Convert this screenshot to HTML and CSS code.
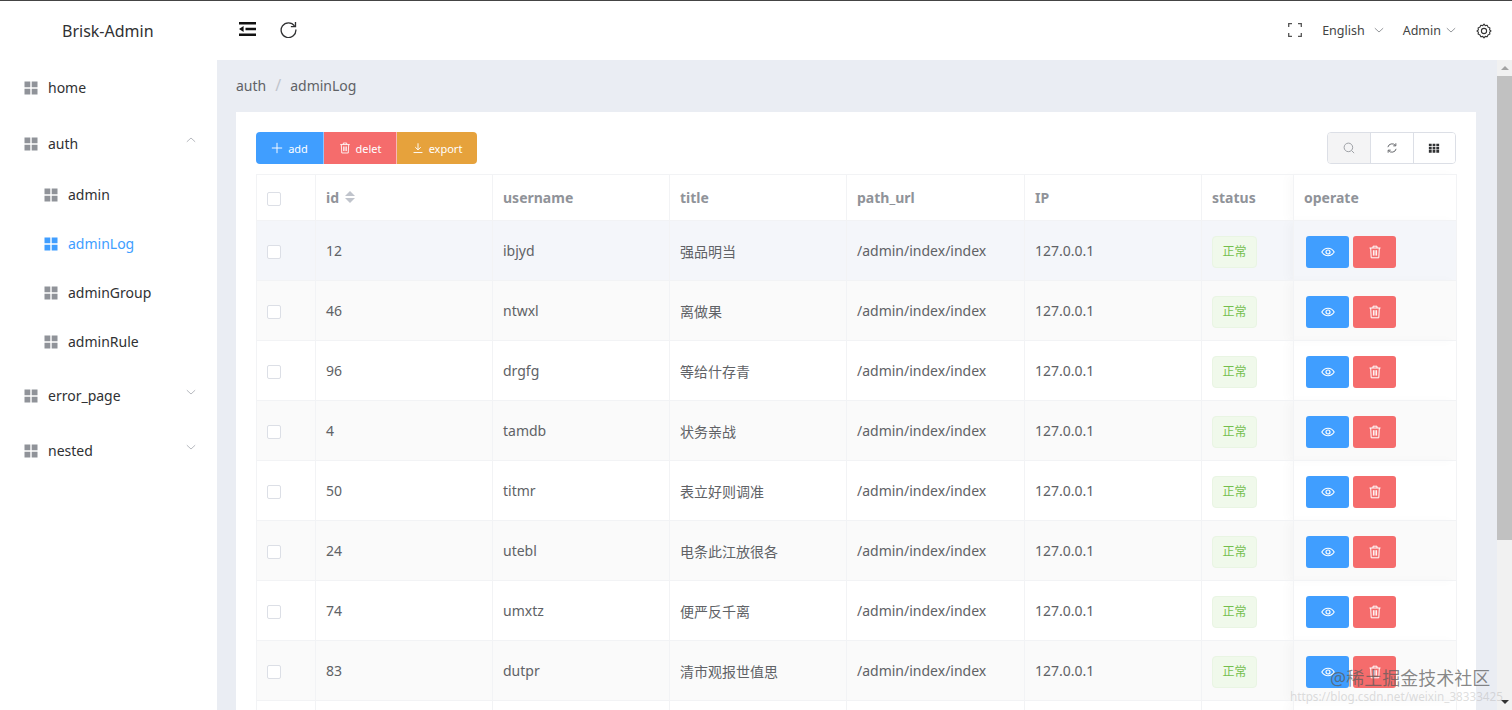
FILE: index.html
```html
<!DOCTYPE html>
<html lang="en">
<head>
<meta charset="UTF-8">
<meta name="viewport" content="width=device-width, initial-scale=1.0">
<title>Brisk-Admin</title>
<link rel="stylesheet" href="styles.css">
</head>
<body>

<svg class="defs" width="0" height="0">
  <symbol id="i-grid" viewBox="0 0 14 14"><path d="M.5 .5h5.800v5.800H.5zM7.700 .5h5.800v5.800H7.700zM.5 7.700h5.800v5.800H.5zM7.700 7.700h5.800v5.800H7.700z"/></symbol>
  <symbol id="i-trash" viewBox="0 0 14 14"><path d="M1.500 3h11M5 3V1.200h4V3M2.700 3l.5 9.800h7.600l.5-9.800M5.400 5.200v5.400M7 5.200v5.400M8.600 5.200v5.400" fill="none" stroke="currentColor" stroke-width="1"/></symbol>
  <symbol id="i-eye" viewBox="0 0 14 14"><path d="M.8 7C2.300 4.600 4.400 3.300 7 3.300s4.700 1.300 6.200 3.700c-1.500 2.400-3.600 3.700-6.200 3.700S2.300 9.400.8 7z" fill="none" stroke="currentColor" stroke-width="1.100"/><circle cx="7" cy="7" r="2" fill="none" stroke="currentColor" stroke-width="1.200"/></symbol>
  <symbol id="i-down" viewBox="0 0 12 12"><path d="M1 3.800l5 4.600 5-4.600" fill="none" stroke="currentColor" stroke-width="1"/></symbol>
</svg>

<div class="topline"></div>
<div class="layout">
  <aside class="sidebar">
    <div class="logo">Brisk-Admin</div>
    <nav class="menu">
      <a class="menu-item item-home"><svg class="grid"><use href="#i-grid"/></svg>home</a>
      <a class="menu-item item-auth"><svg class="grid"><use href="#i-grid"/></svg>auth<svg class="arrow up"><use href="#i-down"/></svg></a>
      <a class="sub-item"><svg class="grid"><use href="#i-grid"/></svg>admin</a>
      <a class="sub-item active"><svg class="grid"><use href="#i-grid"/></svg>adminLog</a>
      <a class="sub-item"><svg class="grid"><use href="#i-grid"/></svg>adminGroup</a>
      <a class="sub-item"><svg class="grid"><use href="#i-grid"/></svg>adminRule</a>
      <a class="menu-item item-error"><svg class="grid"><use href="#i-grid"/></svg>error_page<svg class="arrow"><use href="#i-down"/></svg></a>
      <a class="menu-item item-nested"><svg class="grid"><use href="#i-grid"/></svg>nested<svg class="arrow"><use href="#i-down"/></svg></a>
    </nav>
  </aside>

  <div class="right">
    <header class="navbar">
      <div class="nav-left">
        <svg class="fold" viewBox="0 0 17 14"><path d="M0 0h17v2.400H0zM6.500 5.800H17v2.400H6.500zM0 11.600h17V14H0zM0 7l4.600-2.900v5.800z"/></svg>
        <svg class="refresh" viewBox="0 0 18 18"><path d="M15.400 5.200A7.800 7.800 0 1 0 16.800 9" fill="none" stroke="currentColor" stroke-width="1.400"/><path d="M16.400 1v4.900h-4.900" fill="none" stroke="currentColor" stroke-width="1.400"/></svg>
      </div>
      <div class="nav-right">
        <svg class="full" viewBox="0 0 14 14"><path d="M.7 4V.7H4M10 .7h3.300V4M13.300 10v3.300H10M4 13.300H.7V10" fill="none" stroke="currentColor" stroke-width="1.300"/></svg>
        <span class="nav-drop lang">English<svg class="arrow"><use href="#i-down"/></svg></span>
        <span class="nav-drop user">Admin<svg class="arrow"><use href="#i-down"/></svg></span>
        <svg class="gear" viewBox="0 0 16 16"><path d="M8 1l1.200 1.600 2-.3.8 1.800 1.900.8-.3 2L15 8l-1.400 1.100.3 2-1.900.8-.8 1.800-2-.3L8 15l-1.200-1.600-2 .3-.8-1.800-1.900-.8.3-2L1 8l1.400-1.100-.3-2 1.900-.8.8-1.800 2 .3z" fill="none" stroke="currentColor" stroke-width="1.100" stroke-linejoin="round"/><circle cx="8" cy="8" r="2.600" fill="none" stroke="currentColor" stroke-width="1.100"/></svg>
      </div>
    </header>

    <div class="body-wrap">
      <main class="main">
        <div class="crumb"><span>auth</span><i>/</i><span>adminLog</span></div>
        <section class="card">
          <div class="toolbar">
            <div class="btn-group">
              <button class="btn blue"><svg viewBox="0 0 14 14"><path d="M7 1v12M1 7h12" fill="none" stroke="currentColor" stroke-width="1.100"/></svg>add</button>
              <button class="btn red"><svg><use href="#i-trash"/></svg>delet</button>
              <button class="btn orange"><svg viewBox="0 0 14 14"><path d="M7 1.500v7.500M3.800 6l3.200 3.200L10.200 6M1.800 12.300h10.400" fill="none" stroke="currentColor" stroke-width="1.100"/></svg>export</button>
            </div>
            <div class="tool-group">
              <button class="tool on"><svg viewBox="0 0 14 14"><circle cx="6.300" cy="6.300" r="5" fill="none" stroke="currentColor"/><path d="M10 10l3 3" stroke="currentColor"/></svg></button>
              <button class="tool"><svg viewBox="0 0 14 14"><path d="M2.200 6A5 5 0 0 1 11 4M11.800 8A5 5 0 0 1 3 10" fill="none" stroke="currentColor" stroke-width="1.100"/><path d="M11.500 1.500V4.500H8.500M2.500 12.500V9.500H5.500" fill="none" stroke="currentColor" stroke-width="1.100"/></svg></button>
              <button class="tool dark"><svg viewBox="0 0 14 14"><path d="M1 2h3.300v3H1zM5.400 2h3.200v3H5.400zM9.700 2H13v3H9.700zM1 5.700h3.300v3H1zM5.400 5.700h3.200v3H5.400zM9.700 5.700H13v3H9.700zM1 9.400h3.300v3H1zM5.400 9.400h3.200v3H5.400zM9.700 9.400H13v3H9.700z"/></svg></button>
            </div>
          </div>

          <table class="grid-table">
            <colgroup>
              <col class="c-check"><col class="c-wide"><col class="c-wide"><col class="c-wide"><col class="c-path"><col class="c-wide"><col class="c-status"><col class="c-op">
            </colgroup>
            <thead>
              <tr>
                <th><span class="check"></span></th>
                <th>id <span class="sort"><b class="sort-up"></b><b class="sort-down"></b></span></th>
                <th>username</th>
                <th>title</th>
                <th>path_url</th>
                <th>IP</th>
                <th>status</th>
                <th class="fixed">operate</th>
              </tr>
            </thead>
            <tbody>
              <tr class="hover">
                <td><span class="check"></span></td><td>12</td><td>ibjyd</td><td>强品明当</td><td>/admin/index/index</td><td>127.0.0.1</td>
                <td class="status"><span class="tag">正常</span></td>
                <td class="fixed"><button class="mini blue"><svg><use href="#i-eye"/></svg></button><button class="mini red"><svg><use href="#i-trash"/></svg></button></td>
              </tr>
              <tr class="stripe">
                <td><span class="check"></span></td><td>46</td><td>ntwxl</td><td>离做果</td><td>/admin/index/index</td><td>127.0.0.1</td>
                <td class="status"><span class="tag">正常</span></td>
                <td class="fixed"><button class="mini blue"><svg><use href="#i-eye"/></svg></button><button class="mini red"><svg><use href="#i-trash"/></svg></button></td>
              </tr>
              <tr>
                <td><span class="check"></span></td><td>96</td><td>drgfg</td><td>等给什存青</td><td>/admin/index/index</td><td>127.0.0.1</td>
                <td class="status"><span class="tag">正常</span></td>
                <td class="fixed"><button class="mini blue"><svg><use href="#i-eye"/></svg></button><button class="mini red"><svg><use href="#i-trash"/></svg></button></td>
              </tr>
              <tr class="stripe">
                <td><span class="check"></span></td><td>4</td><td>tamdb</td><td>状务亲战</td><td>/admin/index/index</td><td>127.0.0.1</td>
                <td class="status"><span class="tag">正常</span></td>
                <td class="fixed"><button class="mini blue"><svg><use href="#i-eye"/></svg></button><button class="mini red"><svg><use href="#i-trash"/></svg></button></td>
              </tr>
              <tr>
                <td><span class="check"></span></td><td>50</td><td>titmr</td><td>表立好则调准</td><td>/admin/index/index</td><td>127.0.0.1</td>
                <td class="status"><span class="tag">正常</span></td>
                <td class="fixed"><button class="mini blue"><svg><use href="#i-eye"/></svg></button><button class="mini red"><svg><use href="#i-trash"/></svg></button></td>
              </tr>
              <tr class="stripe">
                <td><span class="check"></span></td><td>24</td><td>utebl</td><td>电条此江放很各</td><td>/admin/index/index</td><td>127.0.0.1</td>
                <td class="status"><span class="tag">正常</span></td>
                <td class="fixed"><button class="mini blue"><svg><use href="#i-eye"/></svg></button><button class="mini red"><svg><use href="#i-trash"/></svg></button></td>
              </tr>
              <tr>
                <td><span class="check"></span></td><td>74</td><td>umxtz</td><td>便严反千离</td><td>/admin/index/index</td><td>127.0.0.1</td>
                <td class="status"><span class="tag">正常</span></td>
                <td class="fixed"><button class="mini blue"><svg><use href="#i-eye"/></svg></button><button class="mini red"><svg><use href="#i-trash"/></svg></button></td>
              </tr>
              <tr class="stripe">
                <td><span class="check"></span></td><td>83</td><td>dutpr</td><td>清市观报世值思</td><td>/admin/index/index</td><td>127.0.0.1</td>
                <td class="status"><span class="tag">正常</span></td>
                <td class="fixed"><button class="mini blue"><svg><use href="#i-eye"/></svg></button><button class="mini red"><svg><use href="#i-trash"/></svg></button></td>
              </tr>
              <tr>
                <td></td><td></td><td></td><td></td><td></td><td></td><td></td><td class="fixed"></td>
              </tr>
            </tbody>
          </table>
        </section>
      </main>
      <div class="scrollbar">
        <b class="sb-up"></b>
        <div class="sb-thumb"></div>
        <b class="sb-down"></b>
      </div>
    </div>
  </div>
</div>

<div class="mark">@稀土掘金技术社区</div>
<div class="mark-url">https://blog.csdn.net/weixin_38333425</div>

</body>
</html>
```

FILE: styles.css
```css
* {
  box-sizing: border-box;
}

html, body {
  height: 100%;
}

body {
  margin: 0;
  overflow: hidden;
  background-color: #fff;
  color: #606266;
  font-family: "Noto Sans", "Noto Sans CJK SC", sans-serif;
  font-size: 14px;
}

.defs {
  position: absolute;
}

.topline {
  height: 1px;
  background-color: #444;
}

.layout {
  display: flex;
  height: 709px;
}

/* sidebar */
.sidebar {
  width: 217px;
  flex-shrink: 0;
}

.logo {
  height: 59px;
  padding: 19px 0 0 62px;
  color: #303133;
  font-size: 16px;
  line-height: 22px;
}

.menu-item, .sub-item {
  display: flex;
  align-items: center;
  color: #303133;
  font-size: 14px;
  line-height: 20px;
}

.menu-item {
  padding-left: 24px;
  height: 56px;
}

.sub-item {
  padding-left: 44px;
  height: 49px;
}

.item-auth {
  margin-bottom: -2px;
}

.item-error {
  margin-top: 2px;
}

.item-nested {
  height: 54px;
}

.grid {
  width: 14px;
  height: 14px;
  margin-right: 10px;
  fill: #909399;
}

.active {
  color: #409eff;
}

.active .grid {
  fill: #409eff;
}

.arrow {
  width: 12px;
  height: 12px;
  color: #a8abb2;
}

.menu-item .arrow {
  width: 10px;
  height: 10px;
  margin-left: auto;
  margin-right: 21px;
  margin-top: -8px;
}

.up {
  transform: rotate(180deg);
}

/* navbar */
.right {
  flex: 1;
  min-width: 0;
  display: flex;
  flex-direction: column;
}

.navbar {
  height: 59px;
  display: flex;
  justify-content: space-between;
  padding: 0 20px 0 22px;
}

.nav-left, .nav-right {
  display: flex;
  align-items: center;
}

.nav-left {
  margin-top: -3px;
}

.fold {
  width: 17px;
  height: 14px;
  fill: #111;
  margin-right: 24px;
}

.refresh {
  width: 17px;
  height: 17px;
  color: #303133;
}

.nav-right {
  margin-top: -1px;
}

.full {
  width: 14px;
  height: 14px;
  color: #555;
  margin-right: 20px;
}

.nav-drop {
  display: flex;
  align-items: center;
  color: #444;
  font-size: 12.500px;
}

.nav-drop .arrow {
  width: 10px;
  height: 10px;
  margin-left: 9px;
  color: #808388;
}

.user .arrow {
  margin-left: 5px;
}

.lang {
  margin-right: 19px;
}

.user {
  margin-right: 20px;
}

.gear {
  width: 16px;
  height: 16px;
  color: #333;
  margin-top: 2px;
}

/* content */
.body-wrap {
  flex: 1;
  min-height: 0;
  display: flex;
}

.main {
  flex: 1;
  min-width: 0;
  padding: 0 21px 0 19px;
  background-color: #eaedf3;
  overflow: hidden;
}

.crumb {
  height: 52px;
  padding-bottom: 2px;
  display: flex;
  align-items: center;
  color: #606266;
  font-size: 14px;
}

.crumb i {
  margin: 0 9px;
  color: #c0c4cc;
  font-style: normal;
  font-size: 16px;
}

.card {
  background-color: #fff;
  padding: 20px 20px 0;
  min-height: 700px;
}

.toolbar {
  display: flex;
  justify-content: space-between;
  height: 42px;
}

.btn-group, .tool-group {
  display: flex;
  height: 32px;
}

button {
  font-family: inherit;
  border: 0;
  padding: 0;
  color: #fff;
}

.btn {
  height: 32px;
  display: flex;
  align-items: center;
  justify-content: center;
  font-size: 11px;
}

.btn svg {
  width: 12px;
  height: 12px;
  margin-right: 5px;
}

.blue {
  background-color: #409eff;
}

.red {
  background-color: #f56c6c;
}

.orange {
  background-color: #e6a23c;
}

.btn.blue {
  width: 67px;
  border-radius: 4px 0 0 4px;
}

.btn.red {
  width: 73px;
  border-left: 1px solid #8cc5ff;
}

.btn.orange {
  width: 81px;
  border-left: 1px solid #fab6b6;
  border-radius: 0 4px 4px 0;
}

.tool-group {
  border: 1px solid #dcdfe6;
  border-radius: 4px;
  overflow: hidden;
}

.tool {
  width: 42.330px;
  background-color: #fff;
  color: #606266;
  border-left: 1px solid #dcdfe6;
  display: flex;
  align-items: center;
  justify-content: center;
}

.tool:first-child {
  border-left: 0;
}

.tool svg {
  width: 12px;
  height: 12px;
}

.on {
  background-color: #f4f4f5;
  color: #909399;
}

.dark svg {
  fill: #303133;
}

/* table */
.grid-table {
  width: 1200px;
  table-layout: fixed;
  border-collapse: collapse;
  border: 1px solid #f2f3f5;
}

.c-check {
  width: 59px;
}

.c-wide {
  width: 177px;
}

.c-path {
  width: 178px;
}

.c-status {
  width: 92px;
}

.c-op {
  width: 163px;
}

.grid-table th, .grid-table td {
  padding: 0 10px;
  text-align: left;
  border: 1px solid #f2f3f5;
  font-size: 14px;
}

.grid-table th {
  height: 46px;
  color: #909399;
  font-weight: 700;
}

.grid-table td {
  height: 60px;
  color: #606266;
}

.grid-table td.status, .grid-table td.fixed {
  padding-top: 2px;
}

.stripe td {
  background-color: #fafafa;
}

.hover td {
  background-color: #f4f6fa;
}

.fixed {
  box-shadow: -6px 0 10px rgba(0, 0, 0, 0.025);
}

.check {
  display: inline-block;
  width: 14px;
  height: 14px;
  border: 1px solid #dcdfe6;
  border-radius: 2px;
  background-color: #fff;
  vertical-align: middle;
}

.sort {
  display: inline-block;
  width: 10px;
  height: 14px;
  margin-left: 2px;
  vertical-align: -2px;
}

.sort b {
  display: block;
  width: 0;
  height: 0;
  border-left: 5px solid transparent;
  border-right: 5px solid transparent;
}

.sort-up {
  border-bottom: 5px solid #c0c4cc;
  margin-bottom: 2px;
}

.sort-down {
  border-top: 5px solid #c0c4cc;
}

.tag {
  display: inline-block;
  width: 45px;
  height: 32px;
  line-height: 30px;
  text-align: center;
  font-size: 12px;
  color: #74bf4e;
  background-color: #f0f9eb;
  border: 1px solid #e9f5e3;
  border-radius: 4px;
}

.fixed .mini:first-child {
  margin-left: 2px;
}

.mini {
  width: 43px;
  height: 32px;
  border-radius: 3px;
  display: inline-flex;
  align-items: center;
  justify-content: center;
  vertical-align: middle;
}

.mini + .mini {
  margin-left: 4px;
}

.mini svg {
  width: 14px;
  height: 14px;
}

/* scrollbar */
.scrollbar {
  width: 15px;
  flex-shrink: 0;
  background-color: #f1f1f1;
  display: flex;
  flex-direction: column;
  align-items: center;
  justify-content: flex-start;
}

.sb-up, .sb-down {
  display: block;
  width: 0;
  height: 0;
  border-left: 4px solid transparent;
  border-right: 4px solid transparent;
}

.sb-up {
  margin: 6px 0 6px;
  border-bottom: 4px solid #a3a3a3;
}

.sb-thumb {
  width: 100%;
  height: 464px;
  background-color: #c1c1c1;
}

.sb-down {
  margin-top: auto;
  margin-bottom: 6px;
  border-top: 4px solid #333;
}

/* watermark over the corner */
.mark {
  position: absolute;
  left: 1330px;
  top: 665px;
  color: rgba(90, 90, 90, 0.72);
  font-size: 18px;
  line-height: 26px;
  white-space: nowrap;
}

.mark-url {
  position: absolute;
  left: 1290px;
  top: 688px;
  color: rgba(170, 170, 170, 0.4);
  font-size: 11.700px;
  line-height: 16px;
  white-space: nowrap;
}
```
